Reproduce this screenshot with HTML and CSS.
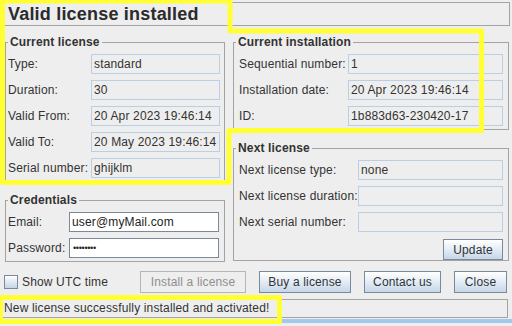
FILE: index.html
```html
<!DOCTYPE html>
<html>
<head>
<link rel="stylesheet" href="styles.css">
</head>
<body>
<div class="dialog">
  <div class="heading">Valid license installed</div>

  <div class="columns">
    <div class="column">
      <fieldset class="group">
        <legend>Current license</legend>
        <div class="rows rows-license">
          <span class="label">Type:</span><span class="field">standard</span>
          <span class="label">Duration:</span><span class="field">30</span>
          <span class="label">Valid From:</span><span class="field">20 Apr 2023 19:46:14</span>
          <span class="label">Valid To:</span><span class="field">20 May 2023 19:46:14</span>
          <span class="label">Serial number:</span><span class="field">ghijklm</span>
        </div>
      </fieldset>

      <fieldset class="group group-spaced">
        <legend>Credentials</legend>
        <div class="rows rows-credentials">
          <span class="label">Email:</span><span class="field field-edit">user@myMail.com</span>
          <span class="label">Password:</span><span class="field field-edit field-secret">&#8226;&#8226;&#8226;&#8226;&#8226;&#8226;&#8226;&#8226;</span>
        </div>
      </fieldset>
    </div>

    <div class="column">
      <fieldset class="group">
        <legend>Current installation</legend>
        <div class="rows rows-install">
          <span class="label">Sequential number:</span><span class="field">1</span>
          <span class="label">Installation date:</span><span class="field">20 Apr 2023 19:46:14</span>
          <span class="label">ID:</span><span class="field">1b883d63-230420-17</span>
        </div>
      </fieldset>

      <fieldset class="group group-spaced">
        <legend>Next license</legend>
        <div class="rows rows-next">
          <span class="label">Next license type:</span><span class="field">none</span>
          <span class="label">Next license duration:</span><span class="field"></span>
          <span class="label">Next serial number:</span><span class="field"></span>
          <button class="btn btn-update">Update</button>
        </div>
      </fieldset>
    </div>
  </div>

  <div class="actions">
    <label class="check"><span class="check-box"></span>Show UTC time</label>
    <button class="btn btn-install" disabled>Install a license</button>
    <button class="btn btn-buy">Buy a license</button>
    <button class="btn btn-contact">Contact us</button>
    <button class="btn btn-close">Close</button>
  </div>

  <div class="status">New license successfully installed and activated!</div>
</div>
<div class="frame-edge"></div>

<!-- review highlights drawn over the dialog -->
<svg class="marks" width="512" height="326" viewBox="0 0 512 326">
  <path d="M2.5 1 H230 V31 H481.5 V130.5 H229 V182.5 H2.5 Z"/>
  <path d="M0.5 297.5 H279.5 V321.5 H0.5 Z"/>
</svg>
</body>
</html>
```

FILE: styles.css
```css
/* java ocean look-alike */
html, body {
    margin: 0;
    padding: 0;
}
body {
    width: 512px;
    height: 326px;
    overflow: hidden;
    position: relative;
    background: #eeeeee;
    color: #333333;
    font-family: 'Liberation Sans', Arial, sans-serif;
    font-size: 12px;
    /* java text comes out a touch wider than the browser's */
    letter-spacing: 0.15px;
}
.dialog {
    padding: 2px 2px 0 2px;
}
.heading {
    box-sizing: border-box;
    height: 24px;
    line-height: 22px;
    padding-left: 5px;
    border: 1px solid #a3a3a3;
    font-size: 18px;
    font-weight: bold;
    letter-spacing: 0.2px;
    color: #2b2b2b;
}
.columns {
    display: grid;
    grid-template-columns: 220px 276px;
    column-gap: 8px;
    align-items: start;
    margin: 9px 1px 0 3px;
}
.column {
    display: flex;
    flex-direction: column;
}
.group {
    margin: 0;
    padding: 0;
    min-width: 0;
    border: 1px solid #a3a3a3;
}
.group-spaced {
    margin-top: 11px;
}
.group legend {
    margin-left: 2px;
    padding: 0 2px;
    line-height: 14px;
    font-weight: bold;
}
.rows {
    display: grid;
    grid-auto-rows: 20px;
    row-gap: 6px;
    align-items: center;
    padding: 5px 4px 3px 2px;
}
.rows-license { grid-template-columns: 83px 1fr; }
.rows-credentials { grid-template-columns: 61px 1fr; padding-right: 5px; }
.rows-install { grid-template-columns: 109px 1fr; padding: 5px 5px 3px 5px; }
.rows-next { grid-template-columns: 119px 1fr; padding: 5px 5px 2px 5px; }
.label {
    white-space: nowrap;
}
.field {
    box-sizing: border-box;
    height: 20px;
    line-height: 18px;
    padding-left: 2px;
    border: 1px solid #b8cfe5;
    white-space: nowrap;
    overflow: hidden;
}
.field-edit {
    background: #ffffff;
    border-color: #7a8a99;
    color: #222222;
}
.field-secret {
    font-size: 9px;
    letter-spacing: -0.3px;
    padding-left: 3px;
}
.btn {
    box-sizing: border-box;
    height: 22px;
    padding: 0;
    border: 1px solid #7a8a99;
    background: linear-gradient(#ffffff 0%, #e6eef6 45%, #c5d7e9 100%);
    color: #333333;
    font-family: inherit;
    font-size: 12px;
    letter-spacing: inherit;
    text-align: center;
}
.btn:disabled {
    background: #eeeeee;
    border-color: #b5b5b5;
    color: #8e8f8f;
}
.btn-update {
    grid-column: 1 / -1;
    justify-self: end;
    width: 60px;
    height: 21px;
    margin-top: 3px;
}
.actions {
    display: flex;
    align-items: center;
    gap: 13px;
    margin-top: 9px;
    padding: 0 3px 0 2px;
}
.check {
    display: flex;
    align-items: center;
    gap: 4px;
    margin-right: auto;
}
.check-box {
    box-sizing: border-box;
    width: 14px;
    height: 14px;
    border: 1px solid #7a8a99;
    background: linear-gradient(#ffffff, #c5d4e3);
}
.btn-install { width: 106px; }
.btn-buy { width: 92px; }
.btn-contact { width: 77px; }
.btn-close { width: 53px; }
.status {
    box-sizing: border-box;
    height: 19px;
    line-height: 17px;
    margin: 6px 2px 0 0;
    padding-left: 1px;
    border: 1px solid #a3a3a3;
    white-space: nowrap;
}
.frame-edge {
    height: 4px;
    margin-top: 1px;
    background: #a4c8ec;
}
.marks {
    position: absolute;
    left: 0;
    top: 0;
    pointer-events: none;
}
.marks path {
    fill: none;
    stroke: #ffff33;
    stroke-width: 5;
    stroke-linejoin: round;
}
```
